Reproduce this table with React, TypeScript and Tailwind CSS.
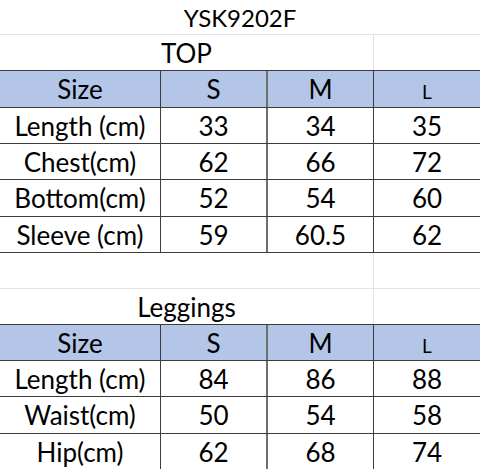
const top = [
  ["Length (cm)", "33", "34", "35"],
  ["Chest(cm)", "62", "66", "72"],
  ["Bottom(cm)", "52", "54", "60"],
  ["Sleeve (cm)", "59", "60.5", "62"],
];

const leggings = [
  ["Length (cm)", "84", "86", "88"],
  ["Waist(cm)", "50", "54", "58"],
  ["Hip(cm)", "62", "68", "74"],
];

const topHeights = ["h-[36px] leading-[36px]", "h-[36px] leading-[36px]", "h-[37px] leading-[37px]", "h-[36px] leading-[36px]"];
const legHeights = ["h-[36px] leading-[36px]", "h-[37px] leading-[37px]", "h-[36px] leading-[36px]"];

function Row({ cells, h, header }: { cells: string[]; h: string; header?: boolean }) {
  const bg = header ? "bg-[#b4c6e7]" : "bg-white";
  return (
    <div className={`flex ${h} ${bg} border-b border-[#3c3c3c]`}>
      <div className="w-[161px] shrink-0 text-center border-r border-[#3c3c3c]">{cells[0]}</div>
      <div className="w-[107px] shrink-0 text-center border-r-2 border-[#6e6e6e]">{cells[1]}</div>
      <div className="w-[106px] shrink-0 text-center border-r border-[#3c3c3c]">{cells[2]}</div>
      <div className="flex-1 text-center">
        {header ? <span className="text-[19px]">{cells[3]}</span> : cells[3]}
      </div>
    </div>
  );
}

function SectionTitle({ title, h }: { title: string; h: string }) {
  return (
    <div className={`flex ${h} border-b border-[#3c3c3c]`}>
      <div className="w-[374px] shrink-0 text-center border-r border-[#dfe3ec]">{title}</div>
      <div className="flex-1" />
    </div>
  );
}

export default function App() {
  return (
    <div
      className="w-[480px] h-[469px] overflow-hidden bg-white text-black text-[26px]"
      style={{ fontFamily: "Lato, 'Open Sans', sans-serif" }}
    >
      <div className="h-[35px] leading-[35px] text-[24px] text-center border-b border-[#dfe3ec]">YSK9202F</div>
      <SectionTitle title="TOP" h="h-[36px] leading-[36px]" />
      <Row cells={["Size", "S", "M", "L"]} h="h-[37px] leading-[37px]" header />
      {top.map((r, i) => (
        <Row key={r[0]} cells={r} h={topHeights[i]} />
      ))}
      <div className="flex h-[36px] border-b border-[#dfe3ec]">
        <div className="w-[374px] shrink-0 border-r border-[#dfe3ec]" />
        <div className="flex-1" />
      </div>
      <SectionTitle title="Leggings" h="h-[36px] leading-[36px]" />
      <Row cells={["Size", "S", "M", "L"]} h="h-[36px] leading-[36px]" header />
      {leggings.map((r, i) => (
        <Row key={r[0] + i} cells={r} h={legHeights[i]} />
      ))}
    </div>
  );
}
